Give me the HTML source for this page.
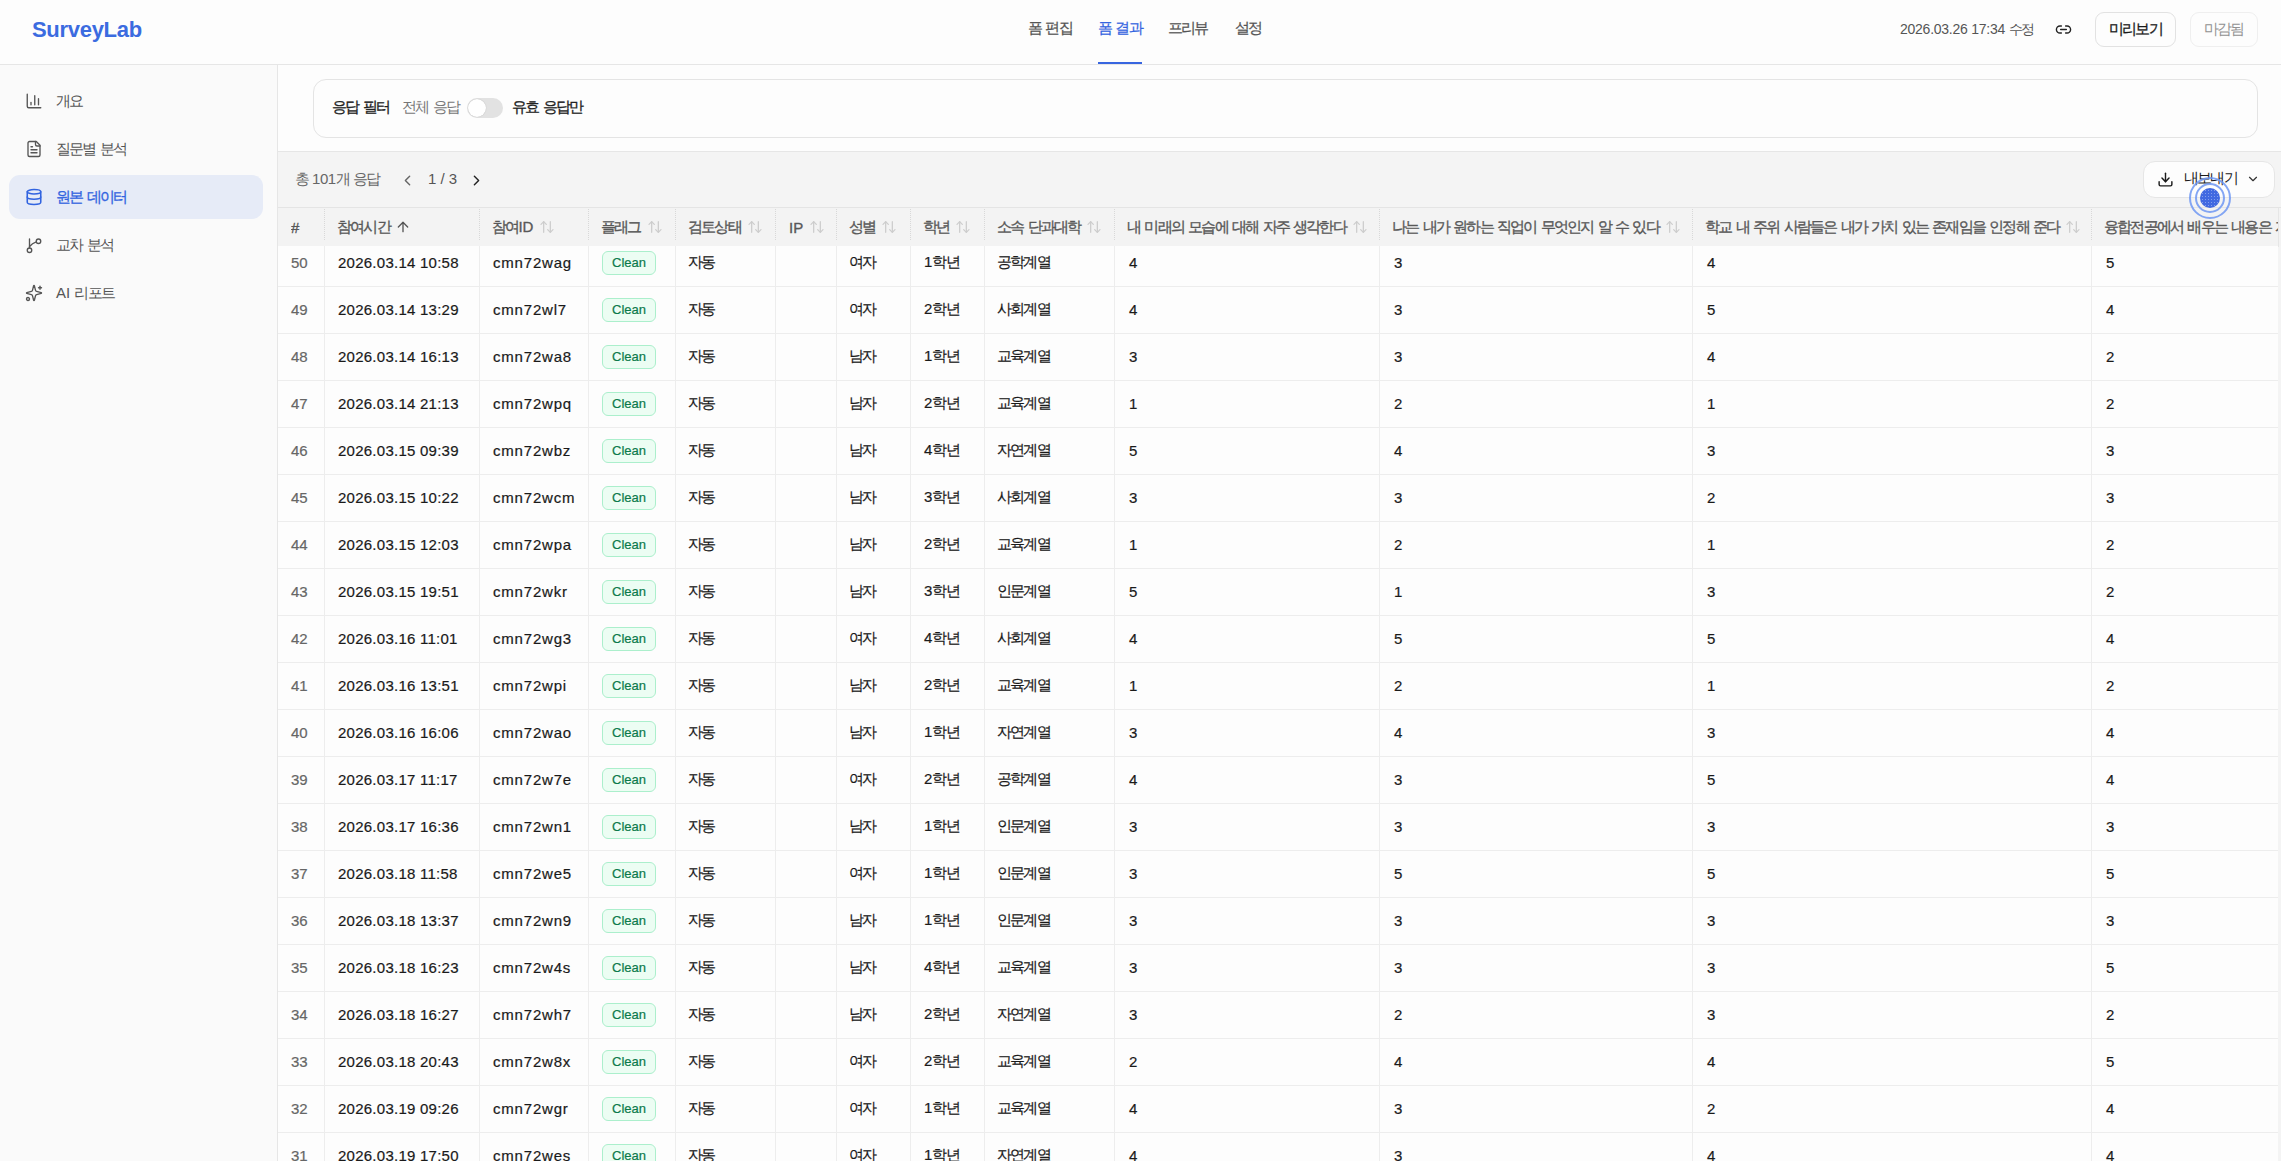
<!DOCTYPE html><html><head><meta charset="utf-8"><style>
*{box-sizing:border-box;margin:0;padding:0}
html,body{width:2281px;height:1161px;overflow:hidden;background:#fdfdfd;font-family:"Liberation Sans",sans-serif;color:#1a1a1a}
.k{letter-spacing:-0.12em}
.sb{font-weight:normal;-webkit-text-stroke:0.32px currentColor}
.a{position:absolute;white-space:nowrap}
svg{display:block}
#hdr{position:absolute;left:0;top:0;width:2281px;height:65px;background:#fdfdfd;border-bottom:1px solid #e6e6e6}
#side{position:absolute;left:0;top:65px;width:278px;height:1096px;background:#fafafa;border-right:1px solid #e6e6e6}
.nav{font-size:15px;line-height:16px;color:#555;-webkit-text-stroke:0.25px currentColor}
.sitem{position:absolute;left:9px;width:254px;height:44px;border-radius:11px}
.sitem .ico{position:absolute;left:16px;top:13px;color:#555}
.sitem .t{position:absolute;left:47px;top:14px;font-size:15px;line-height:16px;color:#555;white-space:nowrap}
.sitem.on{background:#e6ebf7}
.sitem.on .ico,.sitem.on .t{color:#3264e0}
.sitem.on .t{-webkit-text-stroke:0.3px currentColor}
.sitem.on .ico svg{stroke-width:2.1}
#filter{position:absolute;left:313px;top:79px;width:1945px;height:59px;border:1px solid #e4e4e4;border-radius:13px;background:#fdfdfd}
#gray{position:absolute;left:278px;top:151px;width:2003px;height:1010px;background:#f4f4f4;border-top:1px solid #e6e6e6}
#th{position:absolute;left:278px;top:207px;width:2003px;height:39px;background:#f3f3f3;border-top:1px solid #e4e4e4}
.hc{position:absolute;top:0px;height:38px;display:flex;align-items:center;font-size:15px;color:#585858;font-weight:normal;-webkit-text-stroke:0.35px currentColor;white-space:nowrap;overflow:hidden}
.hc .si{color:#cdcdcd;margin-left:6px;flex:none;-webkit-text-stroke:0}
.hc .su{color:#555;margin-left:5px;flex:none}
.hsep{position:absolute;top:1px;height:31px;border-left:1px dotted #d8d8d8}
#tb{position:absolute;left:278px;top:246px;width:2000px;height:915px;background:#fdfdfd;overflow:hidden}
.row{position:absolute;left:0;width:2000px;height:47px;border-bottom:1px solid #ededed}
.c{position:absolute;top:-1px;height:46px;display:flex;align-items:center;font-size:15px;color:#1a1a1a;white-space:nowrap;-webkit-text-stroke:0.2px currentColor}
.dt{letter-spacing:0.25px}
.id{letter-spacing:0.8px}
.vsep{position:absolute;top:0;width:1px;height:915px;background:#ededed}
.badge{display:inline-block;height:24px;line-height:22px;padding:0 9px;border:1px solid #abefcc;background:#ecfdf3;color:#0b7a4b;border-radius:6px;font-size:13px;margin-top:2px}
.btn{position:absolute;border:1px solid #e2e2e2;border-radius:9px;background:#fdfdfd}
</style></head><body>
<div id="hdr"></div>
<div class="a" style="left:32px;top:17px;font-size:22px;line-height:26px;font-weight:bold;color:#3b6be0;letter-spacing:-0.3px">SurveyLab</div>
<div class="a nav" style="left:1028px;top:20px;color:#555"><span class="k">폼</span> <span class="k">편집</span></div>
<div class="a nav" style="left:1098px;top:20px;color:#3565e0"><span class="k">폼</span> <span class="k">결과</span></div>
<div class="a nav" style="left:1168px;top:20px;color:#555"><span class="k">프리뷰</span></div>
<div class="a nav" style="left:1235px;top:20px;color:#555"><span class="k">설정</span></div>
<div class="a" style="left:1098px;top:62px;width:44px;height:2px;background:#3866e0"></div>
<div class="a" style="left:1900px;top:21px;font-size:14px;line-height:16px;color:#555;letter-spacing:-0.25px">2026.03.26 17:34 <span class="k">수정</span></div>
<div class="a" style="left:2055px;top:21px;color:#222"><svg class="" width="17" height="17" viewBox="0 0 24 24" fill="none" stroke="currentColor" stroke-width="2" stroke-linecap="round" stroke-linejoin="round"><path d="M9 17H7A5 5 0 0 1 7 7h2"/><path d="M15 7h2a5 5 0 1 1 0 10h-2"/><line x1="8" x2="16" y1="12" y2="12"/></svg></div>
<div class="btn" style="left:2095px;top:12px;width:81px;height:35px"></div>
<div class="a sb" style="left:2109px;top:21px;font-size:15px;line-height:16px;color:#1a1a1a;-webkit-text-stroke:0.3px currentColor"><span class="k">미리보기</span></div>
<div class="btn" style="left:2190px;top:12px;width:68px;height:35px;border-color:#efefef"></div>
<div class="a" style="left:2204px;top:21px;font-size:15px;line-height:16px;color:#929292"><span class="k">마감됨</span></div>
<div id="side"></div>
<div class="sitem" style="top:79px"><div class="ico"><svg class="" width="18" height="18" viewBox="0 0 24 24" fill="none" stroke="currentColor" stroke-width="1.8" stroke-linecap="round" stroke-linejoin="round"><path d="M3 3v16a2 2 0 0 0 2 2h16"/><path d="M18 17V9"/><path d="M13 17V5"/><path d="M8 17v-3"/></svg></div><div class="t"><span class="k">개요</span></div></div>
<div class="sitem" style="top:127px"><div class="ico"><svg class="" width="18" height="18" viewBox="0 0 24 24" fill="none" stroke="currentColor" stroke-width="1.8" stroke-linecap="round" stroke-linejoin="round"><path d="M15 2H6a2 2 0 0 0-2 2v16a2 2 0 0 0 2 2h12a2 2 0 0 0 2-2V7Z"/><path d="M14 2v4a2 2 0 0 0 2 2h4"/><path d="M10 9H8"/><path d="M16 13H8"/><path d="M16 17H8"/></svg></div><div class="t"><span class="k">질문별</span> <span class="k">분석</span></div></div>
<div class="sitem on" style="top:175px"><div class="ico"><svg class="" width="18" height="18" viewBox="0 0 24 24" fill="none" stroke="currentColor" stroke-width="1.8" stroke-linecap="round" stroke-linejoin="round"><ellipse cx="12" cy="5" rx="9" ry="3"/><path d="M3 5V19A9 3 0 0 0 21 19V5"/><path d="M3 12A9 3 0 0 0 21 12"/></svg></div><div class="t"><span class="k">원본</span> <span class="k">데이터</span></div></div>
<div class="sitem" style="top:223px"><div class="ico"><svg class="" width="18" height="18" viewBox="0 0 24 24" fill="none" stroke="currentColor" stroke-width="1.8" stroke-linecap="round" stroke-linejoin="round"><line x1="6" x2="6" y1="4" y2="16"/><circle cx="18" cy="7" r="3"/><circle cx="6" cy="19" r="3"/><path d="M6 14c2.5-3 5.5-5 9-6.2"/></svg></div><div class="t"><span class="k">교차</span> <span class="k">분석</span></div></div>
<div class="sitem" style="top:271px"><div class="ico"><svg class="" width="18" height="18" viewBox="0 0 24 24" fill="none" stroke="currentColor" stroke-width="1.8" stroke-linecap="round" stroke-linejoin="round"><path d="M9.937 15.5A2 2 0 0 0 8.5 14.063l-6.135-1.582a.5.5 0 0 1 0-.962L8.5 9.936A2 2 0 0 0 9.937 8.5l1.582-6.135a.5.5 0 0 1 .963 0L14.063 8.5A2 2 0 0 0 15.5 9.937l6.135 1.581a.5.5 0 0 1 0 .964L15.5 14.063a2 2 0 0 0-1.437 1.437l-1.582 6.135a.5.5 0 0 1-.963 0z"/><path d="M20 3v4"/><path d="M22 5h-4"/><circle cx="4" cy="20" r="2"/></svg></div><div class="t">AI <span class="k">리포트</span></div></div>
<div id="filter"></div>
<div class="a sb" style="left:332px;top:99px;font-size:15px;line-height:16px;color:#222"><span class="k">응답</span> <span class="k">필터</span></div>
<div class="a" style="left:402px;top:99px;font-size:15px;line-height:16px;color:#777"><span class="k">전체</span> <span class="k">응답</span></div>
<div class="a" style="left:467px;top:98px;width:36px;height:20px;border-radius:10px;background:#e2e2e2"></div>
<div class="a" style="left:468px;top:99px;width:18px;height:18px;border-radius:9px;background:#fff;box-shadow:0 0 1px rgba(0,0,0,.25)"></div>
<div class="a sb" style="left:512px;top:99px;font-size:15px;line-height:16px;color:#222"><span class="k">유효</span> <span class="k">응답만</span></div>
<div id="gray"></div>
<div class="a" style="left:295px;top:171px;font-size:15px;line-height:16px;color:#666;letter-spacing:-0.4px"><span class="k">총</span> 101<span class="k">개</span> <span class="k">응답</span></div>
<div class="a" style="left:399px;top:172px;color:#666"><svg class="" width="17" height="17" viewBox="0 0 24 24" fill="none" stroke="currentColor" stroke-width="2" stroke-linecap="round" stroke-linejoin="round"><path d="m15 18-6-6 6-6"/></svg></div>
<div class="a" style="left:428px;top:171px;font-size:15px;line-height:16px;color:#555">1 / 3</div>
<div class="a" style="left:468px;top:172px;color:#222"><svg class="" width="17" height="17" viewBox="0 0 24 24" fill="none" stroke="currentColor" stroke-width="2" stroke-linecap="round" stroke-linejoin="round"><path d="m9 18 6-6-6-6"/></svg></div>
<div class="btn" style="left:2143px;top:161px;width:132px;height:37px;border-radius:12px;border-color:#e6e6e6"></div>
<div class="a" style="left:2157px;top:171px;color:#1a1a1a"><svg class="" width="17" height="17" viewBox="0 0 24 24" fill="none" stroke="currentColor" stroke-width="2" stroke-linecap="round" stroke-linejoin="round"><path d="M21 15v4a2 2 0 0 1-2 2H5a2 2 0 0 1-2-2v-4"/><polyline points="7 10 12 15 17 10"/><line x1="12" x2="12" y1="15" y2="3"/></svg></div>
<div class="a" style="left:2184px;top:170px;font-size:15px;line-height:16px;color:#1a1a1a"><span class="k">내보내기</span></div>
<div class="a" style="left:2246px;top:172px;color:#333"><svg class="" width="14" height="14" viewBox="0 0 24 24" fill="none" stroke="currentColor" stroke-width="2" stroke-linecap="round" stroke-linejoin="round"><path d="m6 9 6 6 6-6"/></svg></div>
<div id="th">
<div class="hc" style="left:13px;width:33px"><span>#</span></div>
<div class="hsep" style="left:46px"></div>
<div class="hc" style="left:59px;width:142px"><span><span class="k">참여시간</span></span><svg class="su" width="16" height="16" viewBox="0 0 24 24" fill="none" stroke="currentColor" stroke-width="2" stroke-linecap="round" stroke-linejoin="round"><path d="m5 12 7-7 7 7"/><path d="M12 19V5"/></svg></div>
<div class="hsep" style="left:201px"></div>
<div class="hc" style="left:214px;width:96px"><span><span class="k">참여</span>ID</span><svg class="si" width="16" height="16" viewBox="0 0 24 24" fill="none" stroke="currentColor" stroke-width="1.9" stroke-linecap="round" stroke-linejoin="round"><path d="m21 16-4 4-4-4"/><path d="M17 20V4"/><path d="m3 8 4-4 4 4"/><path d="M7 4v16"/></svg></div>
<div class="hsep" style="left:310px"></div>
<div class="hc" style="left:323px;width:74px"><span><span class="k">플래그</span></span><svg class="si" width="16" height="16" viewBox="0 0 24 24" fill="none" stroke="currentColor" stroke-width="1.9" stroke-linecap="round" stroke-linejoin="round"><path d="m21 16-4 4-4-4"/><path d="M17 20V4"/><path d="m3 8 4-4 4 4"/><path d="M7 4v16"/></svg></div>
<div class="hsep" style="left:397px"></div>
<div class="hc" style="left:410px;width:87px"><span><span class="k">검토상태</span></span><svg class="si" width="16" height="16" viewBox="0 0 24 24" fill="none" stroke="currentColor" stroke-width="1.9" stroke-linecap="round" stroke-linejoin="round"><path d="m21 16-4 4-4-4"/><path d="M17 20V4"/><path d="m3 8 4-4 4 4"/><path d="M7 4v16"/></svg></div>
<div class="hsep" style="left:497px"></div>
<div class="hc" style="left:511px;width:47px"><span>IP</span><svg class="si" width="16" height="16" viewBox="0 0 24 24" fill="none" stroke="currentColor" stroke-width="1.9" stroke-linecap="round" stroke-linejoin="round"><path d="m21 16-4 4-4-4"/><path d="M17 20V4"/><path d="m3 8 4-4 4 4"/><path d="M7 4v16"/></svg></div>
<div class="hsep" style="left:558px"></div>
<div class="hc" style="left:571px;width:61px"><span><span class="k">성별</span></span><svg class="si" width="16" height="16" viewBox="0 0 24 24" fill="none" stroke="currentColor" stroke-width="1.9" stroke-linecap="round" stroke-linejoin="round"><path d="m21 16-4 4-4-4"/><path d="M17 20V4"/><path d="m3 8 4-4 4 4"/><path d="M7 4v16"/></svg></div>
<div class="hsep" style="left:632px"></div>
<div class="hc" style="left:645px;width:61px"><span><span class="k">학년</span></span><svg class="si" width="16" height="16" viewBox="0 0 24 24" fill="none" stroke="currentColor" stroke-width="1.9" stroke-linecap="round" stroke-linejoin="round"><path d="m21 16-4 4-4-4"/><path d="M17 20V4"/><path d="m3 8 4-4 4 4"/><path d="M7 4v16"/></svg></div>
<div class="hsep" style="left:706px"></div>
<div class="hc" style="left:719px;width:117px"><span><span class="k">소속</span> <span class="k">단과대학</span></span><svg class="si" width="16" height="16" viewBox="0 0 24 24" fill="none" stroke="currentColor" stroke-width="1.9" stroke-linecap="round" stroke-linejoin="round"><path d="m21 16-4 4-4-4"/><path d="M17 20V4"/><path d="m3 8 4-4 4 4"/><path d="M7 4v16"/></svg></div>
<div class="hsep" style="left:836px"></div>
<div class="hc" style="left:849px;width:252px"><span><span class="k">내</span> <span class="k">미래의</span> <span class="k">모습에</span> <span class="k">대해</span> <span class="k">자주</span> <span class="k">생각한다</span></span><svg class="si" width="16" height="16" viewBox="0 0 24 24" fill="none" stroke="currentColor" stroke-width="1.9" stroke-linecap="round" stroke-linejoin="round"><path d="m21 16-4 4-4-4"/><path d="M17 20V4"/><path d="m3 8 4-4 4 4"/><path d="M7 4v16"/></svg></div>
<div class="hsep" style="left:1101px"></div>
<div class="hc" style="left:1114px;width:300px"><span><span class="k">나는</span> <span class="k">내가</span> <span class="k">원하는</span> <span class="k">직업이</span> <span class="k">무엇인지</span> <span class="k">알</span> <span class="k">수</span> <span class="k">있다</span></span><svg class="si" width="16" height="16" viewBox="0 0 24 24" fill="none" stroke="currentColor" stroke-width="1.9" stroke-linecap="round" stroke-linejoin="round"><path d="m21 16-4 4-4-4"/><path d="M17 20V4"/><path d="m3 8 4-4 4 4"/><path d="M7 4v16"/></svg></div>
<div class="hsep" style="left:1414px"></div>
<div class="hc" style="left:1427px;width:386px"><span><span class="k">학교</span> <span class="k">내</span> <span class="k">주위</span> <span class="k">사람들은</span> <span class="k">내가</span> <span class="k">가치</span> <span class="k">있는</span> <span class="k">존재임을</span> <span class="k">인정해</span> <span class="k">준다</span></span><svg class="si" width="16" height="16" viewBox="0 0 24 24" fill="none" stroke="currentColor" stroke-width="1.9" stroke-linecap="round" stroke-linejoin="round"><path d="m21 16-4 4-4-4"/><path d="M17 20V4"/><path d="m3 8 4-4 4 4"/><path d="M7 4v16"/></svg></div>
<div class="hsep" style="left:1813px"></div>
<div class="hc" style="left:1826px;width:174px"><span><span class="k">융합전공에서</span> <span class="k">배우는</span> <span class="k">내용은</span> <span class="k">자신의</span> <span class="k">진로에</span> <span class="k">도움이</span> <span class="k">된다</span></span><svg class="si" width="16" height="16" viewBox="0 0 24 24" fill="none" stroke="currentColor" stroke-width="1.9" stroke-linecap="round" stroke-linejoin="round"><path d="m21 16-4 4-4-4"/><path d="M17 20V4"/><path d="m3 8 4-4 4 4"/><path d="M7 4v16"/></svg></div>
<div style="position:absolute;left:2000px;top:0;width:1px;height:39px;background:#e6e6e6"></div>
</div>
<div id="tb">
<div class="row" style="top:-6px">
<div class="c" style="left:13px;color:#666"><span>50</span></div>
<div class="c dt" style="left:60px;color:#1a1a1a"><span>2026.03.14 10:58</span></div>
<div class="c id" style="left:215px;color:#1a1a1a"><span>cmn72wag</span></div>
<div class="c" style="left:324px;color:#1a1a1a"><span><span class="badge">Clean</span></span></div>
<div class="c" style="left:410px;color:#1a1a1a"><span><span class="k">자동</span></span></div>
<div class="c" style="left:511px;color:#1a1a1a"><span></span></div>
<div class="c" style="left:571px;color:#1a1a1a"><span><span class="k">여자</span></span></div>
<div class="c" style="left:646px;color:#1a1a1a"><span>1<span class="k">학년</span></span></div>
<div class="c" style="left:719px;color:#1a1a1a"><span><span class="k">공학계열</span></span></div>
<div class="c" style="left:851px;color:#1a1a1a"><span>4</span></div>
<div class="c" style="left:1116px;color:#1a1a1a"><span>3</span></div>
<div class="c" style="left:1429px;color:#1a1a1a"><span>4</span></div>
<div class="c" style="left:1828px;color:#1a1a1a"><span>5</span></div>
</div>
<div class="row" style="top:41px">
<div class="c" style="left:13px;color:#666"><span>49</span></div>
<div class="c dt" style="left:60px;color:#1a1a1a"><span>2026.03.14 13:29</span></div>
<div class="c id" style="left:215px;color:#1a1a1a"><span>cmn72wl7</span></div>
<div class="c" style="left:324px;color:#1a1a1a"><span><span class="badge">Clean</span></span></div>
<div class="c" style="left:410px;color:#1a1a1a"><span><span class="k">자동</span></span></div>
<div class="c" style="left:511px;color:#1a1a1a"><span></span></div>
<div class="c" style="left:571px;color:#1a1a1a"><span><span class="k">여자</span></span></div>
<div class="c" style="left:646px;color:#1a1a1a"><span>2<span class="k">학년</span></span></div>
<div class="c" style="left:719px;color:#1a1a1a"><span><span class="k">사회계열</span></span></div>
<div class="c" style="left:851px;color:#1a1a1a"><span>4</span></div>
<div class="c" style="left:1116px;color:#1a1a1a"><span>3</span></div>
<div class="c" style="left:1429px;color:#1a1a1a"><span>5</span></div>
<div class="c" style="left:1828px;color:#1a1a1a"><span>4</span></div>
</div>
<div class="row" style="top:88px">
<div class="c" style="left:13px;color:#666"><span>48</span></div>
<div class="c dt" style="left:60px;color:#1a1a1a"><span>2026.03.14 16:13</span></div>
<div class="c id" style="left:215px;color:#1a1a1a"><span>cmn72wa8</span></div>
<div class="c" style="left:324px;color:#1a1a1a"><span><span class="badge">Clean</span></span></div>
<div class="c" style="left:410px;color:#1a1a1a"><span><span class="k">자동</span></span></div>
<div class="c" style="left:511px;color:#1a1a1a"><span></span></div>
<div class="c" style="left:571px;color:#1a1a1a"><span><span class="k">남자</span></span></div>
<div class="c" style="left:646px;color:#1a1a1a"><span>1<span class="k">학년</span></span></div>
<div class="c" style="left:719px;color:#1a1a1a"><span><span class="k">교육계열</span></span></div>
<div class="c" style="left:851px;color:#1a1a1a"><span>3</span></div>
<div class="c" style="left:1116px;color:#1a1a1a"><span>3</span></div>
<div class="c" style="left:1429px;color:#1a1a1a"><span>4</span></div>
<div class="c" style="left:1828px;color:#1a1a1a"><span>2</span></div>
</div>
<div class="row" style="top:135px">
<div class="c" style="left:13px;color:#666"><span>47</span></div>
<div class="c dt" style="left:60px;color:#1a1a1a"><span>2026.03.14 21:13</span></div>
<div class="c id" style="left:215px;color:#1a1a1a"><span>cmn72wpq</span></div>
<div class="c" style="left:324px;color:#1a1a1a"><span><span class="badge">Clean</span></span></div>
<div class="c" style="left:410px;color:#1a1a1a"><span><span class="k">자동</span></span></div>
<div class="c" style="left:511px;color:#1a1a1a"><span></span></div>
<div class="c" style="left:571px;color:#1a1a1a"><span><span class="k">남자</span></span></div>
<div class="c" style="left:646px;color:#1a1a1a"><span>2<span class="k">학년</span></span></div>
<div class="c" style="left:719px;color:#1a1a1a"><span><span class="k">교육계열</span></span></div>
<div class="c" style="left:851px;color:#1a1a1a"><span>1</span></div>
<div class="c" style="left:1116px;color:#1a1a1a"><span>2</span></div>
<div class="c" style="left:1429px;color:#1a1a1a"><span>1</span></div>
<div class="c" style="left:1828px;color:#1a1a1a"><span>2</span></div>
</div>
<div class="row" style="top:182px">
<div class="c" style="left:13px;color:#666"><span>46</span></div>
<div class="c dt" style="left:60px;color:#1a1a1a"><span>2026.03.15 09:39</span></div>
<div class="c id" style="left:215px;color:#1a1a1a"><span>cmn72wbz</span></div>
<div class="c" style="left:324px;color:#1a1a1a"><span><span class="badge">Clean</span></span></div>
<div class="c" style="left:410px;color:#1a1a1a"><span><span class="k">자동</span></span></div>
<div class="c" style="left:511px;color:#1a1a1a"><span></span></div>
<div class="c" style="left:571px;color:#1a1a1a"><span><span class="k">남자</span></span></div>
<div class="c" style="left:646px;color:#1a1a1a"><span>4<span class="k">학년</span></span></div>
<div class="c" style="left:719px;color:#1a1a1a"><span><span class="k">자연계열</span></span></div>
<div class="c" style="left:851px;color:#1a1a1a"><span>5</span></div>
<div class="c" style="left:1116px;color:#1a1a1a"><span>4</span></div>
<div class="c" style="left:1429px;color:#1a1a1a"><span>3</span></div>
<div class="c" style="left:1828px;color:#1a1a1a"><span>3</span></div>
</div>
<div class="row" style="top:229px">
<div class="c" style="left:13px;color:#666"><span>45</span></div>
<div class="c dt" style="left:60px;color:#1a1a1a"><span>2026.03.15 10:22</span></div>
<div class="c id" style="left:215px;color:#1a1a1a"><span>cmn72wcm</span></div>
<div class="c" style="left:324px;color:#1a1a1a"><span><span class="badge">Clean</span></span></div>
<div class="c" style="left:410px;color:#1a1a1a"><span><span class="k">자동</span></span></div>
<div class="c" style="left:511px;color:#1a1a1a"><span></span></div>
<div class="c" style="left:571px;color:#1a1a1a"><span><span class="k">남자</span></span></div>
<div class="c" style="left:646px;color:#1a1a1a"><span>3<span class="k">학년</span></span></div>
<div class="c" style="left:719px;color:#1a1a1a"><span><span class="k">사회계열</span></span></div>
<div class="c" style="left:851px;color:#1a1a1a"><span>3</span></div>
<div class="c" style="left:1116px;color:#1a1a1a"><span>3</span></div>
<div class="c" style="left:1429px;color:#1a1a1a"><span>2</span></div>
<div class="c" style="left:1828px;color:#1a1a1a"><span>3</span></div>
</div>
<div class="row" style="top:276px">
<div class="c" style="left:13px;color:#666"><span>44</span></div>
<div class="c dt" style="left:60px;color:#1a1a1a"><span>2026.03.15 12:03</span></div>
<div class="c id" style="left:215px;color:#1a1a1a"><span>cmn72wpa</span></div>
<div class="c" style="left:324px;color:#1a1a1a"><span><span class="badge">Clean</span></span></div>
<div class="c" style="left:410px;color:#1a1a1a"><span><span class="k">자동</span></span></div>
<div class="c" style="left:511px;color:#1a1a1a"><span></span></div>
<div class="c" style="left:571px;color:#1a1a1a"><span><span class="k">남자</span></span></div>
<div class="c" style="left:646px;color:#1a1a1a"><span>2<span class="k">학년</span></span></div>
<div class="c" style="left:719px;color:#1a1a1a"><span><span class="k">교육계열</span></span></div>
<div class="c" style="left:851px;color:#1a1a1a"><span>1</span></div>
<div class="c" style="left:1116px;color:#1a1a1a"><span>2</span></div>
<div class="c" style="left:1429px;color:#1a1a1a"><span>1</span></div>
<div class="c" style="left:1828px;color:#1a1a1a"><span>2</span></div>
</div>
<div class="row" style="top:323px">
<div class="c" style="left:13px;color:#666"><span>43</span></div>
<div class="c dt" style="left:60px;color:#1a1a1a"><span>2026.03.15 19:51</span></div>
<div class="c id" style="left:215px;color:#1a1a1a"><span>cmn72wkr</span></div>
<div class="c" style="left:324px;color:#1a1a1a"><span><span class="badge">Clean</span></span></div>
<div class="c" style="left:410px;color:#1a1a1a"><span><span class="k">자동</span></span></div>
<div class="c" style="left:511px;color:#1a1a1a"><span></span></div>
<div class="c" style="left:571px;color:#1a1a1a"><span><span class="k">남자</span></span></div>
<div class="c" style="left:646px;color:#1a1a1a"><span>3<span class="k">학년</span></span></div>
<div class="c" style="left:719px;color:#1a1a1a"><span><span class="k">인문계열</span></span></div>
<div class="c" style="left:851px;color:#1a1a1a"><span>5</span></div>
<div class="c" style="left:1116px;color:#1a1a1a"><span>1</span></div>
<div class="c" style="left:1429px;color:#1a1a1a"><span>3</span></div>
<div class="c" style="left:1828px;color:#1a1a1a"><span>2</span></div>
</div>
<div class="row" style="top:370px">
<div class="c" style="left:13px;color:#666"><span>42</span></div>
<div class="c dt" style="left:60px;color:#1a1a1a"><span>2026.03.16 11:01</span></div>
<div class="c id" style="left:215px;color:#1a1a1a"><span>cmn72wg3</span></div>
<div class="c" style="left:324px;color:#1a1a1a"><span><span class="badge">Clean</span></span></div>
<div class="c" style="left:410px;color:#1a1a1a"><span><span class="k">자동</span></span></div>
<div class="c" style="left:511px;color:#1a1a1a"><span></span></div>
<div class="c" style="left:571px;color:#1a1a1a"><span><span class="k">여자</span></span></div>
<div class="c" style="left:646px;color:#1a1a1a"><span>4<span class="k">학년</span></span></div>
<div class="c" style="left:719px;color:#1a1a1a"><span><span class="k">사회계열</span></span></div>
<div class="c" style="left:851px;color:#1a1a1a"><span>4</span></div>
<div class="c" style="left:1116px;color:#1a1a1a"><span>5</span></div>
<div class="c" style="left:1429px;color:#1a1a1a"><span>5</span></div>
<div class="c" style="left:1828px;color:#1a1a1a"><span>4</span></div>
</div>
<div class="row" style="top:417px">
<div class="c" style="left:13px;color:#666"><span>41</span></div>
<div class="c dt" style="left:60px;color:#1a1a1a"><span>2026.03.16 13:51</span></div>
<div class="c id" style="left:215px;color:#1a1a1a"><span>cmn72wpi</span></div>
<div class="c" style="left:324px;color:#1a1a1a"><span><span class="badge">Clean</span></span></div>
<div class="c" style="left:410px;color:#1a1a1a"><span><span class="k">자동</span></span></div>
<div class="c" style="left:511px;color:#1a1a1a"><span></span></div>
<div class="c" style="left:571px;color:#1a1a1a"><span><span class="k">남자</span></span></div>
<div class="c" style="left:646px;color:#1a1a1a"><span>2<span class="k">학년</span></span></div>
<div class="c" style="left:719px;color:#1a1a1a"><span><span class="k">교육계열</span></span></div>
<div class="c" style="left:851px;color:#1a1a1a"><span>1</span></div>
<div class="c" style="left:1116px;color:#1a1a1a"><span>2</span></div>
<div class="c" style="left:1429px;color:#1a1a1a"><span>1</span></div>
<div class="c" style="left:1828px;color:#1a1a1a"><span>2</span></div>
</div>
<div class="row" style="top:464px">
<div class="c" style="left:13px;color:#666"><span>40</span></div>
<div class="c dt" style="left:60px;color:#1a1a1a"><span>2026.03.16 16:06</span></div>
<div class="c id" style="left:215px;color:#1a1a1a"><span>cmn72wao</span></div>
<div class="c" style="left:324px;color:#1a1a1a"><span><span class="badge">Clean</span></span></div>
<div class="c" style="left:410px;color:#1a1a1a"><span><span class="k">자동</span></span></div>
<div class="c" style="left:511px;color:#1a1a1a"><span></span></div>
<div class="c" style="left:571px;color:#1a1a1a"><span><span class="k">남자</span></span></div>
<div class="c" style="left:646px;color:#1a1a1a"><span>1<span class="k">학년</span></span></div>
<div class="c" style="left:719px;color:#1a1a1a"><span><span class="k">자연계열</span></span></div>
<div class="c" style="left:851px;color:#1a1a1a"><span>3</span></div>
<div class="c" style="left:1116px;color:#1a1a1a"><span>4</span></div>
<div class="c" style="left:1429px;color:#1a1a1a"><span>3</span></div>
<div class="c" style="left:1828px;color:#1a1a1a"><span>4</span></div>
</div>
<div class="row" style="top:511px">
<div class="c" style="left:13px;color:#666"><span>39</span></div>
<div class="c dt" style="left:60px;color:#1a1a1a"><span>2026.03.17 11:17</span></div>
<div class="c id" style="left:215px;color:#1a1a1a"><span>cmn72w7e</span></div>
<div class="c" style="left:324px;color:#1a1a1a"><span><span class="badge">Clean</span></span></div>
<div class="c" style="left:410px;color:#1a1a1a"><span><span class="k">자동</span></span></div>
<div class="c" style="left:511px;color:#1a1a1a"><span></span></div>
<div class="c" style="left:571px;color:#1a1a1a"><span><span class="k">여자</span></span></div>
<div class="c" style="left:646px;color:#1a1a1a"><span>2<span class="k">학년</span></span></div>
<div class="c" style="left:719px;color:#1a1a1a"><span><span class="k">공학계열</span></span></div>
<div class="c" style="left:851px;color:#1a1a1a"><span>4</span></div>
<div class="c" style="left:1116px;color:#1a1a1a"><span>3</span></div>
<div class="c" style="left:1429px;color:#1a1a1a"><span>5</span></div>
<div class="c" style="left:1828px;color:#1a1a1a"><span>4</span></div>
</div>
<div class="row" style="top:558px">
<div class="c" style="left:13px;color:#666"><span>38</span></div>
<div class="c dt" style="left:60px;color:#1a1a1a"><span>2026.03.17 16:36</span></div>
<div class="c id" style="left:215px;color:#1a1a1a"><span>cmn72wn1</span></div>
<div class="c" style="left:324px;color:#1a1a1a"><span><span class="badge">Clean</span></span></div>
<div class="c" style="left:410px;color:#1a1a1a"><span><span class="k">자동</span></span></div>
<div class="c" style="left:511px;color:#1a1a1a"><span></span></div>
<div class="c" style="left:571px;color:#1a1a1a"><span><span class="k">남자</span></span></div>
<div class="c" style="left:646px;color:#1a1a1a"><span>1<span class="k">학년</span></span></div>
<div class="c" style="left:719px;color:#1a1a1a"><span><span class="k">인문계열</span></span></div>
<div class="c" style="left:851px;color:#1a1a1a"><span>3</span></div>
<div class="c" style="left:1116px;color:#1a1a1a"><span>3</span></div>
<div class="c" style="left:1429px;color:#1a1a1a"><span>3</span></div>
<div class="c" style="left:1828px;color:#1a1a1a"><span>3</span></div>
</div>
<div class="row" style="top:605px">
<div class="c" style="left:13px;color:#666"><span>37</span></div>
<div class="c dt" style="left:60px;color:#1a1a1a"><span>2026.03.18 11:58</span></div>
<div class="c id" style="left:215px;color:#1a1a1a"><span>cmn72we5</span></div>
<div class="c" style="left:324px;color:#1a1a1a"><span><span class="badge">Clean</span></span></div>
<div class="c" style="left:410px;color:#1a1a1a"><span><span class="k">자동</span></span></div>
<div class="c" style="left:511px;color:#1a1a1a"><span></span></div>
<div class="c" style="left:571px;color:#1a1a1a"><span><span class="k">여자</span></span></div>
<div class="c" style="left:646px;color:#1a1a1a"><span>1<span class="k">학년</span></span></div>
<div class="c" style="left:719px;color:#1a1a1a"><span><span class="k">인문계열</span></span></div>
<div class="c" style="left:851px;color:#1a1a1a"><span>3</span></div>
<div class="c" style="left:1116px;color:#1a1a1a"><span>5</span></div>
<div class="c" style="left:1429px;color:#1a1a1a"><span>5</span></div>
<div class="c" style="left:1828px;color:#1a1a1a"><span>5</span></div>
</div>
<div class="row" style="top:652px">
<div class="c" style="left:13px;color:#666"><span>36</span></div>
<div class="c dt" style="left:60px;color:#1a1a1a"><span>2026.03.18 13:37</span></div>
<div class="c id" style="left:215px;color:#1a1a1a"><span>cmn72wn9</span></div>
<div class="c" style="left:324px;color:#1a1a1a"><span><span class="badge">Clean</span></span></div>
<div class="c" style="left:410px;color:#1a1a1a"><span><span class="k">자동</span></span></div>
<div class="c" style="left:511px;color:#1a1a1a"><span></span></div>
<div class="c" style="left:571px;color:#1a1a1a"><span><span class="k">남자</span></span></div>
<div class="c" style="left:646px;color:#1a1a1a"><span>1<span class="k">학년</span></span></div>
<div class="c" style="left:719px;color:#1a1a1a"><span><span class="k">인문계열</span></span></div>
<div class="c" style="left:851px;color:#1a1a1a"><span>3</span></div>
<div class="c" style="left:1116px;color:#1a1a1a"><span>3</span></div>
<div class="c" style="left:1429px;color:#1a1a1a"><span>3</span></div>
<div class="c" style="left:1828px;color:#1a1a1a"><span>3</span></div>
</div>
<div class="row" style="top:699px">
<div class="c" style="left:13px;color:#666"><span>35</span></div>
<div class="c dt" style="left:60px;color:#1a1a1a"><span>2026.03.18 16:23</span></div>
<div class="c id" style="left:215px;color:#1a1a1a"><span>cmn72w4s</span></div>
<div class="c" style="left:324px;color:#1a1a1a"><span><span class="badge">Clean</span></span></div>
<div class="c" style="left:410px;color:#1a1a1a"><span><span class="k">자동</span></span></div>
<div class="c" style="left:511px;color:#1a1a1a"><span></span></div>
<div class="c" style="left:571px;color:#1a1a1a"><span><span class="k">남자</span></span></div>
<div class="c" style="left:646px;color:#1a1a1a"><span>4<span class="k">학년</span></span></div>
<div class="c" style="left:719px;color:#1a1a1a"><span><span class="k">교육계열</span></span></div>
<div class="c" style="left:851px;color:#1a1a1a"><span>3</span></div>
<div class="c" style="left:1116px;color:#1a1a1a"><span>3</span></div>
<div class="c" style="left:1429px;color:#1a1a1a"><span>3</span></div>
<div class="c" style="left:1828px;color:#1a1a1a"><span>5</span></div>
</div>
<div class="row" style="top:746px">
<div class="c" style="left:13px;color:#666"><span>34</span></div>
<div class="c dt" style="left:60px;color:#1a1a1a"><span>2026.03.18 16:27</span></div>
<div class="c id" style="left:215px;color:#1a1a1a"><span>cmn72wh7</span></div>
<div class="c" style="left:324px;color:#1a1a1a"><span><span class="badge">Clean</span></span></div>
<div class="c" style="left:410px;color:#1a1a1a"><span><span class="k">자동</span></span></div>
<div class="c" style="left:511px;color:#1a1a1a"><span></span></div>
<div class="c" style="left:571px;color:#1a1a1a"><span><span class="k">남자</span></span></div>
<div class="c" style="left:646px;color:#1a1a1a"><span>2<span class="k">학년</span></span></div>
<div class="c" style="left:719px;color:#1a1a1a"><span><span class="k">자연계열</span></span></div>
<div class="c" style="left:851px;color:#1a1a1a"><span>3</span></div>
<div class="c" style="left:1116px;color:#1a1a1a"><span>2</span></div>
<div class="c" style="left:1429px;color:#1a1a1a"><span>3</span></div>
<div class="c" style="left:1828px;color:#1a1a1a"><span>2</span></div>
</div>
<div class="row" style="top:793px">
<div class="c" style="left:13px;color:#666"><span>33</span></div>
<div class="c dt" style="left:60px;color:#1a1a1a"><span>2026.03.18 20:43</span></div>
<div class="c id" style="left:215px;color:#1a1a1a"><span>cmn72w8x</span></div>
<div class="c" style="left:324px;color:#1a1a1a"><span><span class="badge">Clean</span></span></div>
<div class="c" style="left:410px;color:#1a1a1a"><span><span class="k">자동</span></span></div>
<div class="c" style="left:511px;color:#1a1a1a"><span></span></div>
<div class="c" style="left:571px;color:#1a1a1a"><span><span class="k">여자</span></span></div>
<div class="c" style="left:646px;color:#1a1a1a"><span>2<span class="k">학년</span></span></div>
<div class="c" style="left:719px;color:#1a1a1a"><span><span class="k">교육계열</span></span></div>
<div class="c" style="left:851px;color:#1a1a1a"><span>2</span></div>
<div class="c" style="left:1116px;color:#1a1a1a"><span>4</span></div>
<div class="c" style="left:1429px;color:#1a1a1a"><span>4</span></div>
<div class="c" style="left:1828px;color:#1a1a1a"><span>5</span></div>
</div>
<div class="row" style="top:840px">
<div class="c" style="left:13px;color:#666"><span>32</span></div>
<div class="c dt" style="left:60px;color:#1a1a1a"><span>2026.03.19 09:26</span></div>
<div class="c id" style="left:215px;color:#1a1a1a"><span>cmn72wgr</span></div>
<div class="c" style="left:324px;color:#1a1a1a"><span><span class="badge">Clean</span></span></div>
<div class="c" style="left:410px;color:#1a1a1a"><span><span class="k">자동</span></span></div>
<div class="c" style="left:511px;color:#1a1a1a"><span></span></div>
<div class="c" style="left:571px;color:#1a1a1a"><span><span class="k">여자</span></span></div>
<div class="c" style="left:646px;color:#1a1a1a"><span>1<span class="k">학년</span></span></div>
<div class="c" style="left:719px;color:#1a1a1a"><span><span class="k">교육계열</span></span></div>
<div class="c" style="left:851px;color:#1a1a1a"><span>4</span></div>
<div class="c" style="left:1116px;color:#1a1a1a"><span>3</span></div>
<div class="c" style="left:1429px;color:#1a1a1a"><span>2</span></div>
<div class="c" style="left:1828px;color:#1a1a1a"><span>4</span></div>
</div>
<div class="row" style="top:887px">
<div class="c" style="left:13px;color:#666"><span>31</span></div>
<div class="c dt" style="left:60px;color:#1a1a1a"><span>2026.03.19 17:50</span></div>
<div class="c id" style="left:215px;color:#1a1a1a"><span>cmn72wes</span></div>
<div class="c" style="left:324px;color:#1a1a1a"><span><span class="badge">Clean</span></span></div>
<div class="c" style="left:410px;color:#1a1a1a"><span><span class="k">자동</span></span></div>
<div class="c" style="left:511px;color:#1a1a1a"><span></span></div>
<div class="c" style="left:571px;color:#1a1a1a"><span><span class="k">여자</span></span></div>
<div class="c" style="left:646px;color:#1a1a1a"><span>1<span class="k">학년</span></span></div>
<div class="c" style="left:719px;color:#1a1a1a"><span><span class="k">자연계열</span></span></div>
<div class="c" style="left:851px;color:#1a1a1a"><span>4</span></div>
<div class="c" style="left:1116px;color:#1a1a1a"><span>3</span></div>
<div class="c" style="left:1429px;color:#1a1a1a"><span>4</span></div>
<div class="c" style="left:1828px;color:#1a1a1a"><span>4</span></div>
</div>
<div class="vsep" style="left:46px"></div>
<div class="vsep" style="left:201px"></div>
<div class="vsep" style="left:310px"></div>
<div class="vsep" style="left:397px"></div>
<div class="vsep" style="left:497px"></div>
<div class="vsep" style="left:558px"></div>
<div class="vsep" style="left:632px"></div>
<div class="vsep" style="left:706px"></div>
<div class="vsep" style="left:836px"></div>
<div class="vsep" style="left:1101px"></div>
<div class="vsep" style="left:1414px"></div>
<div class="vsep" style="left:1813px"></div>
<div class="vsep" style="left:2000px"></div>
</div>
<div class="a" style="left:2189px;top:177px;width:42px;height:42px;border-radius:50%;border:2px solid rgba(110,150,242,.85)"></div>
<div class="a" style="left:2195px;top:183px;width:30px;height:30px;border-radius:50%;border:2px solid rgba(110,150,242,.85)"></div>
<div class="a" style="left:2200px;top:188px;width:20px;height:20px;border-radius:50%;background:radial-gradient(circle,rgba(255,255,255,.35) 0.5px,transparent 0.9px) 1px 1px/3px 3px,#4169e1"></div>
</body></html>
